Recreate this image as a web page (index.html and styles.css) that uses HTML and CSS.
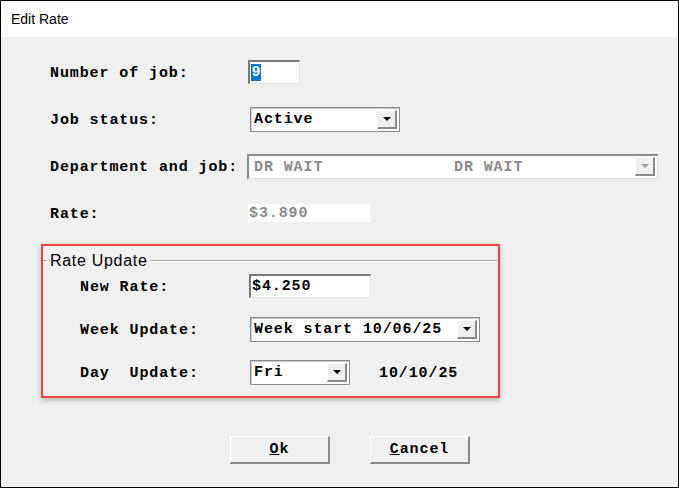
FILE: index.html
```html
<!DOCTYPE html>
<html lang="en">
<head>
  <meta charset="UTF-8">
  <meta name="viewport" content="width=device-width, initial-scale=1.0">
  <title>Edit Rate</title>
  <link rel="stylesheet" href="styles.css">
</head>
<body>
  <div class="window">
    <div class="titlebar">Edit Rate</div>

    <div class="content">
      <div class="form">
        <div class="row">
          <span class="label">Number of job:</span>
          <span class="edit edit-num"><span class="selected">9</span></span>
        </div>
        <div class="row">
          <span class="label">Job status:</span>
          <span class="combo combo-status">
            <span class="combo-text">Active</span>
            <span class="arrow-btn"><span class="arrow"></span></span>
          </span>
        </div>
        <div class="row">
          <span class="label">Department and job:</span>
          <span class="combo combo-dept disabled">
            <span class="combo-text dept-a">DR WAIT</span>
            <span class="combo-text dept-b">DR WAIT</span>
            <span class="arrow-btn"><span class="arrow"></span></span>
          </span>
        </div>
        <div class="row">
          <span class="label">Rate:</span>
          <span class="static-box">$3.890</span>
        </div>
      </div>

      <div class="highlight">
        <div class="group">
          <div class="group-title">
            <span class="line line-short"></span>
            <span class="group-name">Rate Update</span>
            <span class="line"></span>
          </div>
          <div class="group-rows">
            <div class="row">
              <span class="label label-group">New Rate:</span>
              <span class="edit edit-rate">$4.250</span>
            </div>
            <div class="row">
              <span class="label label-group">Week Update:</span>
              <span class="combo combo-week">
                <span class="combo-text">Week start 10/06/25</span>
                <span class="arrow-btn"><span class="arrow"></span></span>
              </span>
            </div>
            <div class="row">
              <span class="label label-group">Day&nbsp; Update:</span>
              <span class="combo combo-day">
                <span class="combo-text">Fri</span>
                <span class="arrow-btn"><span class="arrow"></span></span>
              </span>
              <span class="day-date">10/10/25</span>
            </div>
          </div>
        </div>
      </div>

      <div class="buttons">
        <button class="btn"><u>O</u>k</button>
        <button class="btn"><u>C</u>ancel</button>
      </div>
    </div>
  </div>
</body>
</html>
```

FILE: styles.css
```css
body {
  margin: 0;
  padding: 0;
  background: #f0f0f0;
}

.window {
  width: 679px;
  height: 488px;
  box-sizing: border-box;
  border: 1px solid #000;
  background: #f0f0f0;
  display: flex;
  flex-direction: column;
  overflow: hidden;
}

.titlebar {
  height: 36px;
  background: #fff;
  font-family: "Liberation Sans", Arial, sans-serif;
  font-size: 14px;
  color: #000;
  display: flex;
  align-items: center;
  padding-left: 10px;
  box-sizing: border-box;
}

.content {
  flex: 1;
  padding-top: 23px;
  font-family: "Liberation Mono", "Courier New", monospace;
  font-size: 15px;
  font-weight: bold;
  letter-spacing: 0.9px;
  color: #000;
}

.form {
  display: flex;
  flex-direction: column;
  gap: 23px;
  padding-left: 49px;
}

.row {
  height: 24px;
  display: flex;
  align-items: center;
}

.label {
  width: 198px;
  flex-shrink: 0;
  white-space: pre;
  padding-top: 2px;
}

.label-group {
  width: 169px;
}

/* sunken edit fields */
.edit {
  height: 24px;
  box-sizing: border-box;
  background: #fff;
  border-top: 2px solid #7a7a7a;
  border-left: 2px solid #7a7a7a;
  border-right: 1px solid #e3e3e3;
  border-bottom: 1px solid #e3e3e3;
  display: flex;
  align-items: center;
  padding-left: 1px;
}

.edit-num {
  width: 52px;
}

.edit-rate {
  width: 122px;
  padding-left: 1px;
}

.selected {
  background: #0078d7;
  color: #fff;
  letter-spacing: 0;
  width: 10px;
  height: 17px;
  display: flex;
  align-items: center;
  justify-content: center;
}

/* combo boxes */
.combo {
  height: 25px;
  box-sizing: border-box;
  background: #fff;
  border: 1px solid #8c8c8c;
  box-shadow: inset 1px 1px 0 #c8c8c8;
  display: flex;
  align-items: center;
  padding: 0 2px 0 3px;
  margin-left: 2px;
}

.combo-status { width: 150px; }
.combo-week { width: 230px; }
.combo-day { width: 100px; }

.combo-dept {
  width: 411px;
  margin-left: -1px;
  border-top: 2px solid #8a8a8a;
  border-left: 2px solid #8a8a8a;
  border-right: 1px solid #dcdcdc;
  border-bottom: 1px solid #dcdcdc;
  box-shadow: none;
}

.combo-text {
  flex: 1;
  white-space: pre;
  padding-top: 1px;
}

.disabled .combo-text {
  color: #8c8c8c;
}

.dept-a {
  flex: 0 0 200px;
  padding-left: 2px;
}

.arrow-btn {
  width: 20px;
  height: 19px;
  box-sizing: border-box;
  background: #f0f0f0;
  border-top: 1px solid #fff;
  border-left: 1px solid #fff;
  border-right: 2px solid #8a8a8a;
  border-bottom: 2px solid #8a8a8a;
  display: flex;
  align-items: center;
  justify-content: center;
  flex-shrink: 0;
}

.arrow {
  width: 0;
  height: 0;
  border-left: 4px solid transparent;
  border-right: 4px solid transparent;
  border-top: 4px solid #000;
}

.disabled .arrow {
  border-top-color: #a0a0a0;
}

.static-box {
  width: 122px;
  height: 18px;
  background: #fff;
  color: #8c8c8c;
  display: flex;
  align-items: center;
  padding-left: 1px;
  box-sizing: border-box;
}

/* highlighted group */
.highlight {
  margin: 19px 0 0 40px;
  width: 459px;
  height: 154px;
  box-sizing: border-box;
  border: 2px solid #e8433f;
  box-shadow: 0 2px 5px rgba(0, 0, 0, 0.25);
}

.group {
  margin-right: 1px;
}

.group-title {
  height: 20px;
  margin-top: 5px;
  display: flex;
  align-items: center;
}

.line {
  flex: 1;
  height: 0;
  border-top: 1px solid #a0a0a0;
  border-bottom: 1px solid #fff;
}

.line-short {
  flex: 0 0 4px;
}

.group-name {
  font-family: "Liberation Sans", Arial, sans-serif;
  font-weight: normal;
  font-size: 16px;
  letter-spacing: 0.7px;
  padding: 0 3px 0 3px;
}

.group-rows {
  margin-top: 3px;
  padding-left: 37px;
  display: flex;
  flex-direction: column;
  gap: 19px;
}

.group-rows .combo {
  margin-left: 1px;
}

.day-date {
  margin-left: 29px;
  padding-top: 2px;
}

/* buttons */
.buttons {
  margin-top: 38px;
  padding-left: 229px;
  display: flex;
  gap: 40px;
}

.btn {
  width: 100px;
  height: 28px;
  box-sizing: border-box;
  background: #f0f0f0;
  border-top: 1px solid #fff;
  border-left: 1px solid #fff;
  border-right: 2px solid #8a8a8a;
  border-bottom: 2px solid #8a8a8a;
  font-family: "Liberation Mono", "Courier New", monospace;
  font-size: 15px;
  font-weight: bold;
  letter-spacing: 0.9px;
  color: #000;
  padding: 0;
}
```
